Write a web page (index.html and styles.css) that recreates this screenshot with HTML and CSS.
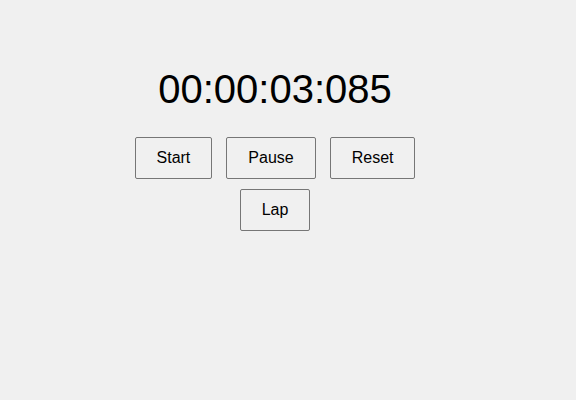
FILE: index.html
```html
<!DOCTYPE html>
<html>
<head>
<meta charset="utf-8">
<link rel="stylesheet" href="styles.css">
</head>
<body>
<div class="app">
  <div class="timer">00:00:03:085</div>
  <div class="controls">
    <div class="row">
      <button class="btn">Start</button>
      <button class="btn">Pause</button>
      <button class="btn">Reset</button>
    </div>
    <div class="row">
      <button class="btn">Lap</button>
    </div>
  </div>
</div>
</body>
</html>
```
FILE: styles.css
```css
html, body {
  margin: 0;
  padding: 0;
  background: #f0f0f0;
}
body {
  font-family: "Liberation Sans", Arial, sans-serif;
  color: #000;
}
.app {
  width: 550px;
  padding-top: 66px;
  display: flex;
  flex-direction: column;
  align-items: center;
}
.timer {
  font-size: 40px;
  line-height: 46px;
  margin-bottom: 25px;
}
.controls {
  display: flex;
  flex-direction: column;
  gap: 10px;
}
.row {
  display: flex;
  justify-content: center;
  gap: 14px;
}
.btn {
  font-family: "Liberation Sans", Arial, sans-serif;
  font-size: 16px;
  line-height: 18px;
  padding: 11px 21px;
  background: #f0f0f0;
  color: #000;
  border: 1px solid #767676;
  border-radius: 2px;
  margin: 0;
}
```
